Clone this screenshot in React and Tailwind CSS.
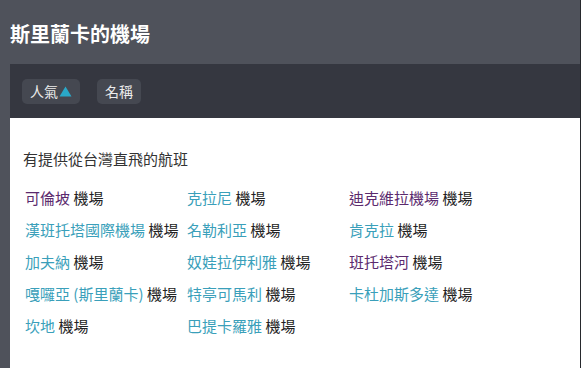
import React from "react";

const PURPLE = "text-[#5b2a6e]";
const TEAL = "text-[#3a9fba]";

const items = [
  ["可倫坡", true],
  ["克拉尼", false],
  ["迪克維拉機場", true],
  ["漢班托塔國際機場", false],
  ["名勒利亞", false],
  ["肯克拉", false],
  ["加夫納", false],
  ["奴娃拉伊利雅", false],
  ["班托塔河", true],
  ["嘎囉亞 (斯里蘭卡)", false],
  ["特亭可馬利", false],
  ["卡杜加斯多達", false],
  ["坎地", false],
  ["巴提卡羅雅", false],
];

export default function App() {
  return (
    <div
      className="w-[581px] h-[368px] overflow-hidden bg-[#4f525b] border-r border-black/50 flex flex-col"
      style={{ fontFamily: '"Noto Sans CJK TC", "Noto Sans", sans-serif' }}
    >
      <div className="h-[64px] shrink-0 flex items-center pl-[10px] pt-[4px]">
        <h1 className="text-[20px] font-bold text-white leading-none">斯里蘭卡的機場</h1>
      </div>
      <div className="ml-[10px] flex-1 flex flex-col">
        <div className="h-[54px] shrink-0 bg-[#353740] flex items-center pl-[12px] gap-[17px]">
          <button className="h-[25px] px-[8px] rounded-[5px] bg-[#454851] text-[#ececec] text-[14px] leading-none flex items-center">
            人氣
            <svg width="13" height="11" viewBox="0 0 13 11" className="ml-[1px]">
              <polygon points="6.5,0.5 12.5,10.5 0.5,10.5" fill="#2aa8c8" />
            </svg>
          </button>
          <button className="h-[25px] px-[8px] rounded-[5px] bg-[#454851] text-[#ececec] text-[14px] leading-none flex items-center">
            名稱
          </button>
        </div>
        <div className="flex-1 bg-white pl-[13px] pt-[31px]">
          <p className="text-[15px] leading-[20px] text-[#333]">有提供從台灣直飛的航班</p>
          <div className="grid grid-cols-[162px_162px_162px] pl-[2px] mt-[12px]">
            {items.map(([name, visited]) => (
              <div key={name} className="h-[32px] flex items-center text-[15px] leading-none whitespace-nowrap">
                <span className={visited ? PURPLE : TEAL}>{name}</span>
                <span className="text-[#222]">&nbsp;機場</span>
              </div>
            ))}
          </div>
        </div>
      </div>
    </div>
  );
}
